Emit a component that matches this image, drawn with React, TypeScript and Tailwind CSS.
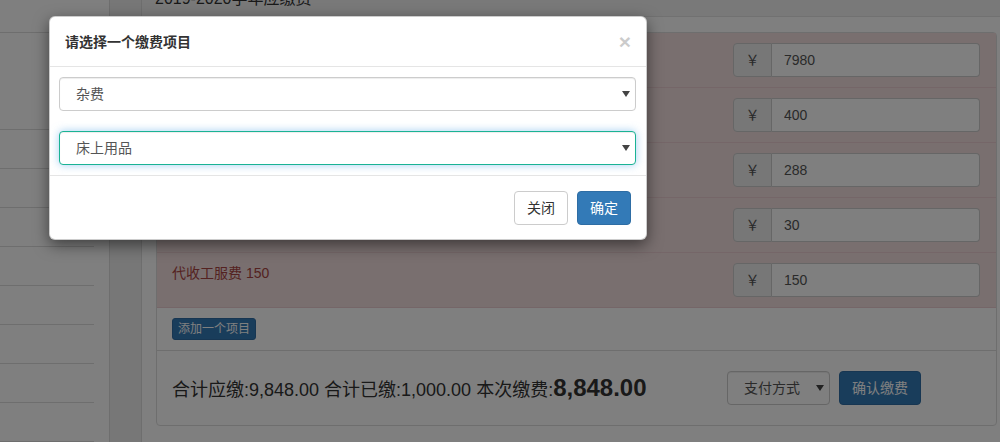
import React from "react"

const font = "font-['Liberation_Sans','Noto_Sans_CJK_SC',sans-serif]"

const rows = [
  { label: "学费 7980", amount: "7980" },
  { label: "住宿费 400", amount: "400" },
  { label: "教材费 288", amount: "288" },
  { label: "保险费 30", amount: "30" },
  { label: "代收工服费 150", amount: "150" },
]

function Caret() {
  return (
    <svg width="8" height="7" viewBox="0 0 8 7" className="pointer-events-none absolute right-[6px] top-1/2 -translate-y-1/2">
      <path d="M0 0.5 H8 L4 6.5 Z" fill="#444" />
    </svg>
  )
}

function FakeSelect({ value, focused, className = "" }: { value: string; focused?: boolean; className?: string }) {
  return (
    <div className={`relative ${className}`}>
      <select
        defaultValue={value}
        className={`block h-[34px] w-full appearance-none rounded-[4px] border bg-white pl-[16px] text-[14px] text-[#555] outline-none ${
          focused
            ? "border-[#1ab394] shadow-[inset_0_1px_1px_rgba(0,0,0,.075),0_0_8px_rgba(102,175,233,.6)]"
            : "border-[#ccc] shadow-[inset_0_1px_1px_rgba(0,0,0,.075)]"
        }`}
      >
        <option>{value}</option>
      </select>
      <Caret />
    </div>
  )
}

export default function App() {
  return (
    <div className={`relative flex h-[442px] w-[1000px] overflow-hidden bg-white text-[14px] text-[#333] ${font}`}>
      {/* left nav */}
      <div className="w-[110px] shrink-0 border-r border-[#ddd]">
        <ul className="w-[94px]">
          <li className="h-[33px] border-b border-[#ddd]" />
          <li className="h-[97px] border-b border-[#ddd]" />
          {Array.from({ length: 8 }).map((_, i) => (
            <li key={i} className="h-[39px] border-b border-[#ddd]" />
          ))}
        </ul>
      </div>
      <div className="w-[32px] shrink-0 border-r border-[#ddd] bg-[#eee]" />

      {/* main */}
      <div className="flex min-w-0 flex-1 flex-col">
        <div className="h-[17px] shrink-0 overflow-hidden border-b border-[#e2e2e2] bg-[#f3f3f3] pl-[13px]">
          <div className="-mt-[11px] text-[16px] leading-[20px] text-[#333]">2019-2020学年应缴费</div>
        </div>

        <div className="pl-[14px] pr-[3px] pt-[15px]">
          <div className="rounded-[4px] border border-[#ddd] bg-white">
            {rows.map((r) => (
              <div key={r.amount} className="flex h-[55px] border-b border-[#ebccd1] bg-[#f2dede] pl-[15px] pr-[16px] pt-[10px]">
                <div className="flex-1 leading-[20px] text-[#a94442]">{r.label}</div>
                <div className="flex h-[34px] w-[247px]">
                  <span className="flex w-[39px] items-center justify-center rounded-l-[4px] border border-[#ccc] bg-[#eee] text-[#555]">
                    ￥
                  </span>
                  <input
                    defaultValue={r.amount}
                    className="min-w-0 flex-1 rounded-r-[4px] border border-l-0 border-[#ccc] bg-white px-[12px] text-[14px] text-[#555] outline-none"
                  />
                </div>
              </div>
            ))}
            <div className="border-b border-[#ddd] px-[15px] py-[10px]">
              <button className="h-[22px] rounded-[3px] border border-[#2e6da4] bg-[#337ab7] px-[5px] text-[12px] leading-[18px] text-white">
                添加一个项目
              </button>
            </div>
            <div className="flex h-[74px] items-center px-[15px]">
              <div className="w-[555px] pt-[2px] text-[18px] leading-[26px] text-[#333]">
                合计应缴:9,848.00 合计已缴:1,000.00 本次缴费:<span className="text-[24px] font-bold">8,848.00</span>
              </div>
              <FakeSelect value="支付方式" className="w-[103px]" />
              <button className="ml-[9px] h-[34px] rounded-[4px] border border-[#2e6da4] bg-[#337ab7] px-[12px] text-[14px] text-white">
                确认缴费
              </button>
            </div>
          </div>
        </div>
      </div>

      {/* backdrop */}
      <div className="absolute inset-0 bg-black/50" />

      {/* modal */}
      <div className="absolute left-[49px] top-[16px] w-[598px] rounded-[6px] border border-black/20 bg-white shadow-[0_5px_15px_rgba(0,0,0,.5)]">
        <div className="flex items-center justify-between border-b border-[#e5e5e5] px-[15px] pb-[14px] pt-[15px]">
          <h4 className="text-[14px] font-bold leading-[20px] text-[#333]">请选择一个缴费项目</h4>
          <button className="text-[21px] font-bold leading-[20px] text-black opacity-20">×</button>
        </div>
        <div className="flex flex-col gap-[20px] border-b border-[#e5e5e5] pb-[10px] pl-[9px] pr-[10px] pt-[10px]">
          <FakeSelect value="杂费" />
          <FakeSelect value="床上用品" focused />
        </div>
        <div className="flex justify-end gap-[9px] px-[15px] pb-[14px] pt-[15px]">
          <button className="h-[34px] rounded-[4px] border border-[#ccc] bg-white px-[12px] text-[14px] text-[#333]">关闭</button>
          <button className="h-[34px] rounded-[4px] border border-[#2e6da4] bg-[#337ab7] px-[12px] text-[14px] text-white">确定</button>
        </div>
      </div>
    </div>
  )
}
